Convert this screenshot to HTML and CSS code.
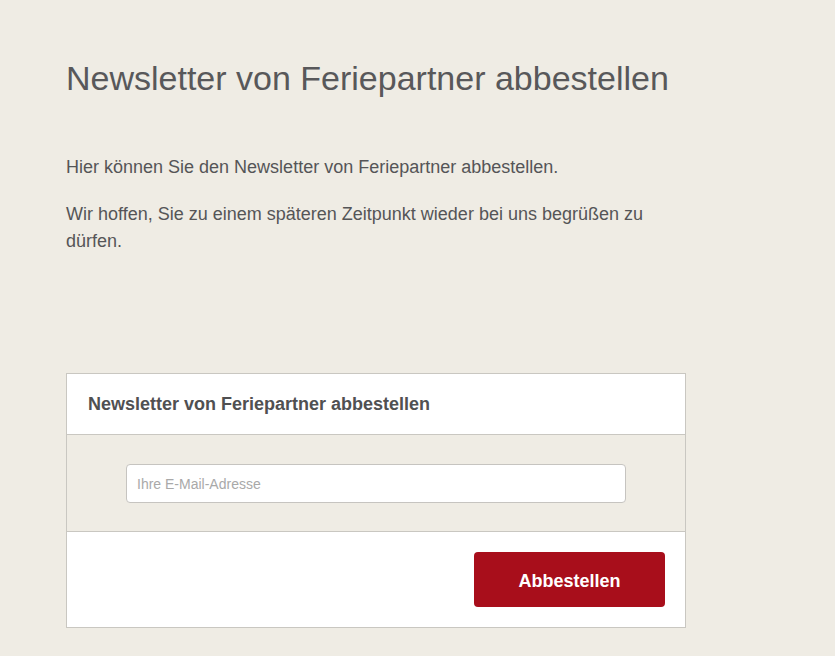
FILE: index.html
```html
<!DOCTYPE html>
<html lang="de">
<head>
<meta charset="utf-8">
<title>Newsletter abbestellen</title>
<link rel="stylesheet" href="styles.css">
</head>
<body>
<main class="page">
  <h1 class="title">Newsletter von Feriepartner abbestellen</h1>
  <div class="intro">
    <p>Hier können Sie den Newsletter von Feriepartner abbestellen.</p>
    <p>Wir hoffen, Sie zu einem späteren Zeitpunkt wieder bei uns begrüßen zu dürfen.</p>
  </div>
  <form class="panel">
    <div class="panel-head">Newsletter von Feriepartner abbestellen</div>
    <div class="panel-body">
      <input class="email" type="email" placeholder="Ihre E-Mail-Adresse">
    </div>
    <div class="panel-foot">
      <button class="btn" type="button">Abbestellen</button>
    </div>
  </form>
</main>
</body>
</html>
```
FILE: styles.css
```css
html, body {
  margin: 0;
  padding: 0;
}
body {
  background: #efece4;
  font-family: "Liberation Sans", Arial, sans-serif;
  color: #555557;
}
.page {
  width: 620px;
  padding: 58px 0 0 66px;
}
.title {
  margin: 0;
  font-size: 34px;
  font-weight: normal;
  line-height: 40px;
  color: #58585a;
}
.intro {
  margin-top: 56px;
  font-size: 18px;
  line-height: 27px;
}
.intro p {
  margin: 0 0 20px;
}
.panel {
  margin-top: 118px;
  border: 1px solid #c9c7c1;
  background: #fff;
}
.panel-head {
  padding: 0 21px;
  height: 60px;
  line-height: 60px;
  font-size: 18px;
  font-weight: bold;
  color: #505052;
  border-bottom: 1px solid #c9c7c1;
}
.panel-body {
  background: #efece4;
  display: flex;
  justify-content: center;
  padding: 29px 0 28px;
  border-bottom: 1px solid #c9c7c1;
}
.email {
  box-sizing: border-box;
  width: 500px;
  height: 39px;
  border: 1px solid #c6c4c0;
  border-radius: 4px;
  background: #fff;
  padding: 0 10px;
  font-family: "Liberation Sans", Arial, sans-serif;
  font-size: 14px;
  color: #555;
}
.email::placeholder {
  color: #a9a9a9;
}
.panel-foot {
  display: flex;
  justify-content: flex-end;
  padding: 20px 20px 20px;
}
.btn {
  width: 191px;
  height: 55px;
  padding: 3px 0 0;
  border: 0;
  border-radius: 4px;
  background: #a80e1b;
  color: #fff;
  font-family: "Liberation Sans", Arial, sans-serif;
  font-size: 18px;
  font-weight: bold;
}
```
